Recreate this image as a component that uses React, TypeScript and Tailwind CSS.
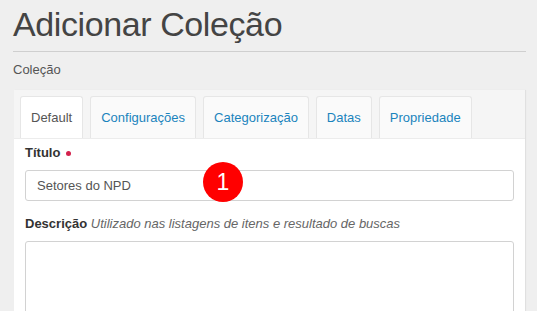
const tabs = ['Default', 'Configurações', 'Categorização', 'Datas', 'Propriedade'];

export default function App() {
  return (
    <div className="h-screen overflow-hidden bg-[#efefef] pl-[13px] pr-[11px] font-['Liberation_Sans',Arial,sans-serif]">
      {/* Cabeçalho */}
      <h1 className="border-b border-[#cfcfcf] pt-[6px] pb-[8px] text-[34px] leading-[37px] tracking-[-0.4px] text-[#444]">
        Adicionar Coleção
      </h1>
      <div className="mt-[9px] text-[13px] leading-[18px] text-[#555]">Coleção</div>

      {/* Painel */}
      <div className="mx-[1px] mt-[11px] bg-[#f5f5f5] shadow-[1px_0_1px_rgba(0,0,0,0.06)]">
        <div className="flex gap-[7px] px-[6px] pt-[6px]">
          {tabs.map((tab, i) => (
            <div
              key={tab}
              className={
                i === 0
                  ? 'flex h-[42px] items-center rounded-t-[3px] border border-b-0 border-[#e6e6e6] bg-white px-[10px] text-[13px] text-[#555]'
                  : 'flex h-[42px] items-center rounded-t-[3px] border border-b-0 border-[#e6e6e6] bg-[#fafafa] px-[10px] text-[13px] text-[#1a84bd]'
              }
            >
              {tab}
            </div>
          ))}
        </div>

        <div className="border-t border-[#ececec] bg-white px-[11px] pt-[6px] pb-4">
          <label className="flex items-center text-[13px] font-bold leading-[16px] text-[#333]">
            Título
            <span className="ml-[6px] h-[5px] w-[5px] rounded-full bg-[#d3214c]" />
          </label>

          <div className="relative mt-[9px]">
            <div className="flex h-[31px] items-center rounded-[3px] border border-[#d2d2d2] px-[11px] text-[13px] text-[#555]">
              Setores do NPD
            </div>
            <div className="absolute top-[-8px] left-[178px] flex h-[40px] w-[40px] items-center justify-center rounded-full bg-[#ff0000] text-[23px] leading-none text-white">
              1
            </div>
          </div>

          <div className="mt-[15px] text-[13px] leading-[16px] text-[#333]">
            <span className="font-bold">Descrição</span>{' '}
            <span className="italic text-[#666]">Utilizado nas listagens de itens e resultado de buscas</span>
          </div>

          <div className="mt-[9px] h-[100px] rounded-[3px] border border-[#d2d2d2]" />
        </div>
      </div>
    </div>
  );
}
